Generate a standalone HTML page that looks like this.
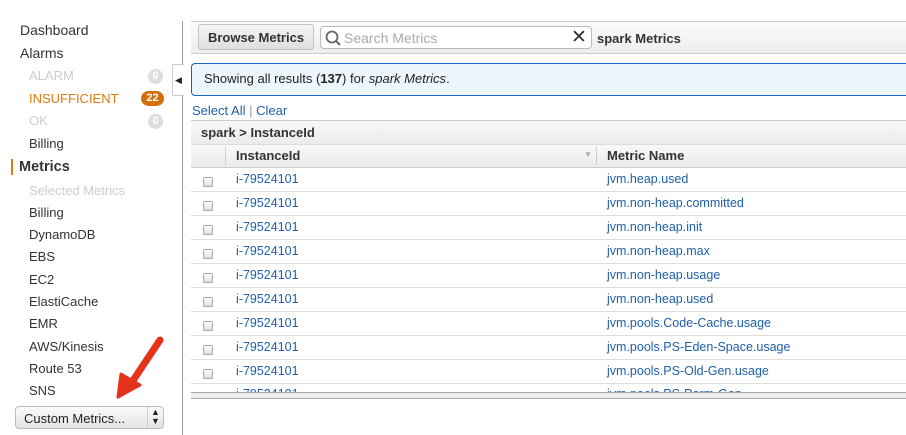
<!DOCTYPE html>
<html><head><style>
*{margin:0;padding:0;box-sizing:border-box}
body{width:906px;height:435px;background:#fff;font-family:"Liberation Sans",Arial,sans-serif;font-size:13px;color:#222;position:relative;overflow:hidden}
.a{position:absolute;white-space:nowrap}
.s{left:20px;font-size:14px;color:#333}
.sub{left:29px;font-size:13px;color:#333}
.g{color:#ccc}
.badge{position:absolute;left:148px;width:15px;height:15px;border-radius:8px;background:#ddd;color:#fff;font-size:11px;font-weight:bold;text-align:center;line-height:15px}
.lnk{color:#1f5fa8}
.row{position:absolute;left:191px;width:715px;height:24px;border-bottom:1px solid #ddd}
.cb{position:absolute;left:12px;top:9px;width:10px;height:10px;border:1px solid #aaa;border-radius:2px;background:linear-gradient(#fff,#ddd)}
.c1{position:absolute;left:45px;top:4px;color:#1f5fa8;font-size:12.5px}
.c2{position:absolute;left:416px;top:4px;color:#1f5fa8;font-size:12.5px}
</style></head><body>
<div class="a s" style="top:22px">Dashboard</div>
<div class="a s" style="top:45px">Alarms</div>
<div class="a sub g" style="top:68px">ALARM</div><div class="badge" style="top:69px">0</div>
<div class="a sub" style="top:91px;color:#e07a10">INSUFFICIENT</div><div class="badge" style="top:91px;left:141px;width:23px;background:#d46f0c">22</div>
<div class="a sub g" style="top:113px">OK</div><div class="badge" style="top:114px">0</div>
<div class="a sub" style="top:136px">Billing</div>
<div style="position:absolute;left:11px;top:159px;width:2px;height:16px;background:#e07a10"></div>
<div class="a s" style="top:159px;left:19px;font-weight:bold;font-size:14.5px">Metrics</div>
<div class="a sub g" style="top:183px">Selected Metrics</div>
<div class="a sub" style="top:205px">Billing</div>
<div class="a sub" style="top:227px">DynamoDB</div>
<div class="a sub" style="top:249px">EBS</div>
<div class="a sub" style="top:272px">EC2</div>
<div class="a sub" style="top:294px">ElastiCache</div>
<div class="a sub" style="top:316px">EMR</div>
<div class="a sub" style="top:339px">AWS/Kinesis</div>
<div class="a sub" style="top:361px">Route 53</div>
<div class="a sub" style="top:383px">SNS</div>
<div class="a" style="left:15px;top:406px;width:149px;height:23px;border:1px solid #bbb;border-radius:4px;background:linear-gradient(#fafafa,#e4e4e4)">
<span class="a" style="left:8px;top:4px;font-size:13px">Custom Metrics...</span>
<span class="a" style="left:131px;top:0;height:21px;border-left:1px solid #ccc"></span>
<span class="a" style="left:135px;top:1px;font-size:9px;line-height:9px">▲<br>▼</span></div>
<svg class="a" style="left:110px;top:330px" width="60" height="75"><path d="M50 10 L20 55" stroke="#e5321b" stroke-width="7" stroke-linecap="round"/><path d="M8 67 L11 44 L30 55 Z" fill="#e5321b" stroke="#e5321b" stroke-width="3" stroke-linejoin="round"/></svg>
<div style="position:absolute;left:182px;top:21px;width:1px;height:414px;background:#999"></div>
<div style="position:absolute;left:172px;top:64px;width:12px;height:32px;border:1px solid #ccc;border-right:none;background:#fff;font-size:9px;line-height:30px;padding-left:2px">◀</div>
<div style="position:absolute;left:191px;top:21px;width:715px;height:33px;border-top:1px solid #ccc;border-bottom:1px solid #ccc;background:linear-gradient(#fafafa,#eee)"></div>
<div class="a" style="left:198px;top:24px;width:116px;height:26px;border:1px solid #c3c3c3;border-radius:3px;background:linear-gradient(#f6f6f6,#dedede);font-weight:bold;text-align:center;line-height:25px;color:#333">Browse Metrics</div>
<div class="a" style="left:320px;top:26px;width:272px;height:23px;border:1px solid #bbb;border-radius:4px;background:#fff">
<svg class="a" style="left:3px;top:2px" width="18" height="18"><circle cx="8" cy="8" r="5.5" fill="none" stroke="#666" stroke-width="1.8"/><path d="M12 12 L16 16" stroke="#666" stroke-width="2"/></svg>
<span class="a" style="left:23px;top:3px;font-size:14px;color:#aaa">Search Metrics</span>
<span class="a" style="left:250px;top:-1px;font-size:19px;color:#333">✕</span></div>
<div class="a" style="left:597px;top:31px;font-weight:bold;color:#333">spark Metrics</div>
<div style="position:absolute;left:191px;top:63px;width:715px;height:33px;border:1px solid #1b63c4;border-right:none;border-radius:4px 0 0 4px;background:#eef6fd"></div>
<div class="a" style="left:204px;top:71px">Showing all results (<b>137</b>) for <i>spark Metrics</i>.</div>
<div class="a" style="left:192px;top:103px;font-size:13px"><span class="lnk">Select All</span> <span style="color:#999">|</span> <span class="lnk">Clear</span></div>
<div style="position:absolute;left:191px;top:120px;width:715px;height:24px;border-top:1px solid #ccc;background:linear-gradient(#f8f8f8,#ebebeb)"></div>
<div class="a" style="left:201px;top:125px;font-weight:bold;color:#333">spark &gt; InstanceId</div>
<div style="position:absolute;left:191px;top:144px;width:715px;height:24px;border-top:1px solid #ddd;border-bottom:1px solid #ccc;background:linear-gradient(#f7f7f7,#ececec)"></div>
<div style="position:absolute;left:225px;top:147px;width:1px;height:18px;background:#ccc"></div>
<div style="position:absolute;left:596px;top:147px;width:1px;height:18px;background:#ccc"></div>
<div class="a" style="left:236px;top:148px;font-weight:bold;color:#333">InstanceId</div>
<div class="a" style="left:584px;top:150px;font-size:8px;color:#aaa">▼</div>
<div class="a" style="left:607px;top:148px;font-weight:bold;color:#333">Metric Name</div>
<div class="row" style="top:168px"><div class="cb"></div><div class="c1">i-79524101</div><div class="c2">jvm.heap.used</div></div>
<div class="row" style="top:192px"><div class="cb"></div><div class="c1">i-79524101</div><div class="c2">jvm.non-heap.committed</div></div>
<div class="row" style="top:216px"><div class="cb"></div><div class="c1">i-79524101</div><div class="c2">jvm.non-heap.init</div></div>
<div class="row" style="top:240px"><div class="cb"></div><div class="c1">i-79524101</div><div class="c2">jvm.non-heap.max</div></div>
<div class="row" style="top:264px"><div class="cb"></div><div class="c1">i-79524101</div><div class="c2">jvm.non-heap.usage</div></div>
<div class="row" style="top:288px"><div class="cb"></div><div class="c1">i-79524101</div><div class="c2">jvm.non-heap.used</div></div>
<div class="row" style="top:312px"><div class="cb"></div><div class="c1">i-79524101</div><div class="c2">jvm.pools.Code-Cache.usage</div></div>
<div class="row" style="top:336px"><div class="cb"></div><div class="c1">i-79524101</div><div class="c2">jvm.pools.PS-Eden-Space.usage</div></div>
<div class="row" style="top:360px"><div class="cb"></div><div class="c1">i-79524101</div><div class="c2">jvm.pools.PS-Old-Gen.usage</div></div>
<div style="position:absolute;left:191px;top:384px;width:715px;height:8px;overflow:hidden"><div class="c1" style="top:3px">i-79524101</div><div class="c2" style="top:3px">jvm.pools.PS-Perm-Gen</div></div>
<div style="position:absolute;left:191px;top:392px;width:715px;height:7px;border-top:1px solid #aaa;border-bottom:1px solid #aaa;background:#eee"></div>
</body></html>
